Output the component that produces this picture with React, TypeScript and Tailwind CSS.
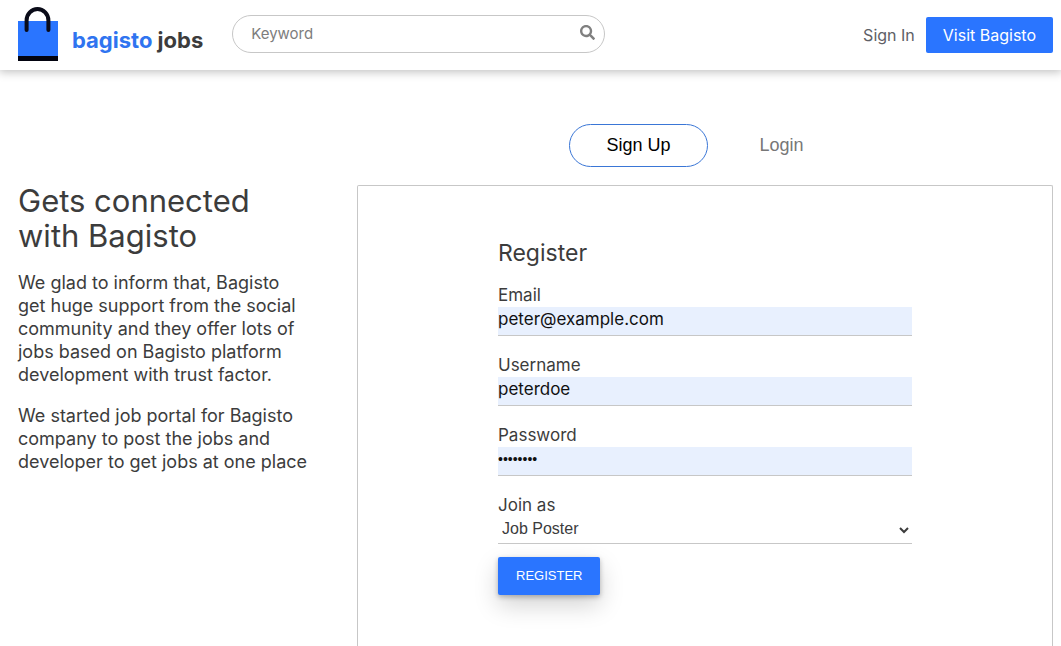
import { useState } from "react";
import { FaSearch } from "react-icons/fa";

function BagLogo() {
  return (
    <svg viewBox="0 0 40 54" className="mb-0.5 h-[54px] w-10" aria-hidden="true">
      <rect x="0" y="14" width="40" height="35" fill="#2a75ff" />
      <rect x="0" y="49" width="40" height="5" fill="#02030f" />
      <path d="M8.6 23V13.4a10.9 11.3 0 0 1 21.8 0V23" fill="none" stroke="#0a0b18" strokeWidth="4" strokeLinecap="round" />
    </svg>
  );
}

function Header() {
  return (
    <header className="flex h-[70px] items-center pr-2 pl-[18px] shadow-[0_1px_9px_1px_rgba(0,0,0,0.25)]">
      <a href="#" className="flex shrink-0 items-center gap-[14px]">
        <BagLogo />
        <span className="mt-2.5 text-[22px] leading-6 font-bold whitespace-nowrap text-[#3c3c3c]">
          <span className="text-[#2f74f0]">bagisto</span> jobs
        </span>
      </a>

      <form className="mb-0.5 ml-[29px] flex h-[38px] w-[373px] items-center rounded-full border border-[#c7c7c7] pr-[9px] pl-[18px]">
        <input
          type="text"
          placeholder="Keyword"
          aria-label="Keyword"
          className="min-w-0 flex-1 bg-transparent text-[15px] text-[#3c3c3c] outline-none placeholder:text-[#7d7d7d]"
        />
        <button type="button" aria-label="Search" className="mb-1 text-[15px] text-[#808080]">
          <FaSearch />
        </button>
      </form>

      <nav className="ml-auto flex items-center gap-[11px] text-base whitespace-nowrap">
        <a href="#" className="text-[#5e6066]">Sign In</a>
        <a href="#" className="flex h-9 items-center rounded-xs bg-[#2a75ff] px-[17px] text-white">
          Visit Bagisto
        </a>
      </nav>
    </header>
  );
}

type FieldProps = {
  id: string;
  label: string;
  type: string;
  value: string;
};

function Field({ id, label, type, value }: FieldProps) {
  const font = type === "password" ? "font-['Liberation_Sans',sans-serif] text-sm" : "text-[17px]";

  return (
    <div className="mb-[18px] flex flex-col">
      <label htmlFor={id} className="text-[17px] leading-[23px]">{label}</label>
      <input
        id={id}
        type={type}
        defaultValue={value}
        className={`h-[29px] border-b border-[#c7c7c7] bg-[#e8f0fe] pb-1 text-[#111] outline-none ${font}`}
      />
    </div>
  );
}

export default function App() {
  const [tab, setTab] = useState("signup");

  const tabClass = (name: string) =>
    tab === name
      ? "h-[43px] w-[139px] rounded-full border border-[#3a76d6] pb-0.5 text-lg text-black"
      : "h-[43px] w-[139px] rounded-full border border-transparent pb-0.5 text-lg text-[#777]";

  return (
    <div className="flex min-h-screen flex-col bg-white font-['Inter',sans-serif] text-[#3c3c3c]">
      <Header />

      <main className="flex flex-1 flex-col pt-[54px] pr-2 pl-[9px]">
        <div className="flex flex-1">
          <section className="w-1/3 pt-[59px] pr-12 pl-[9px]">
            <h1 className="mb-[18px] text-[31px] leading-[35px]">Gets connected with Bagisto</h1>
            <p className="mb-[18px] text-lg leading-[23px]">
              We glad to inform that, Bagisto get huge support from the social community and they offer lots of jobs
              based on Bagisto platform development with trust factor.
            </p>
            <p className="text-lg leading-[23px]">
              We started job portal for Bagisto company to post the jobs and developer to get jobs at one place
            </p>
          </section>

          <section className="flex w-2/3 flex-col">
            <div className="mb-[18px] flex justify-center gap-1 pl-2.5 font-['Liberation_Sans',sans-serif]">
              <button type="button" className={tabClass("signup")} onClick={() => setTab("signup")}>
                Sign Up
              </button>
              <button type="button" className={tabClass("login")} onClick={() => setTab("login")}>
                Login
              </button>
            </div>

            <form className="flex-1 rounded-t-xs border border-b-0 border-[#c7c7c7] px-6 pt-[54px] pb-[50px] md:px-[140px]">
              <h2 className="mb-[17px] text-[23px] leading-[27px]">Register</h2>
              <Field id="email" label="Email" type="email" value="peter@example.com" />
              <Field id="username" label="Username" type="text" value="peterdoe" />
              <Field id="password" label="Password" type="password" value="password" />

              <div className="mb-[13px] flex flex-col">
                <label htmlFor="join" className="text-[17px] leading-[23px]">Join as</label>
                <select
                  id="join"
                  className="h-[27px] border-b border-[#c7c7c7] bg-transparent pb-1 font-['Liberation_Sans',sans-serif] text-base outline-none"
                >
                  <option>Job Poster</option>
                  <option>Job Seeker</option>
                </select>
              </div>

              <button
                type="button"
                className="h-[38px] rounded-xs bg-[#2a75ff] px-[18px] font-['Liberation_Sans',sans-serif] text-[13px] text-white uppercase shadow-[0_10px_24px_rgba(0,0,0,0.18),0_2px_5px_rgba(0,0,0,0.25)]"
              >
                Register
              </button>
            </form>
          </section>
        </div>
      </main>
    </div>
  );
}
